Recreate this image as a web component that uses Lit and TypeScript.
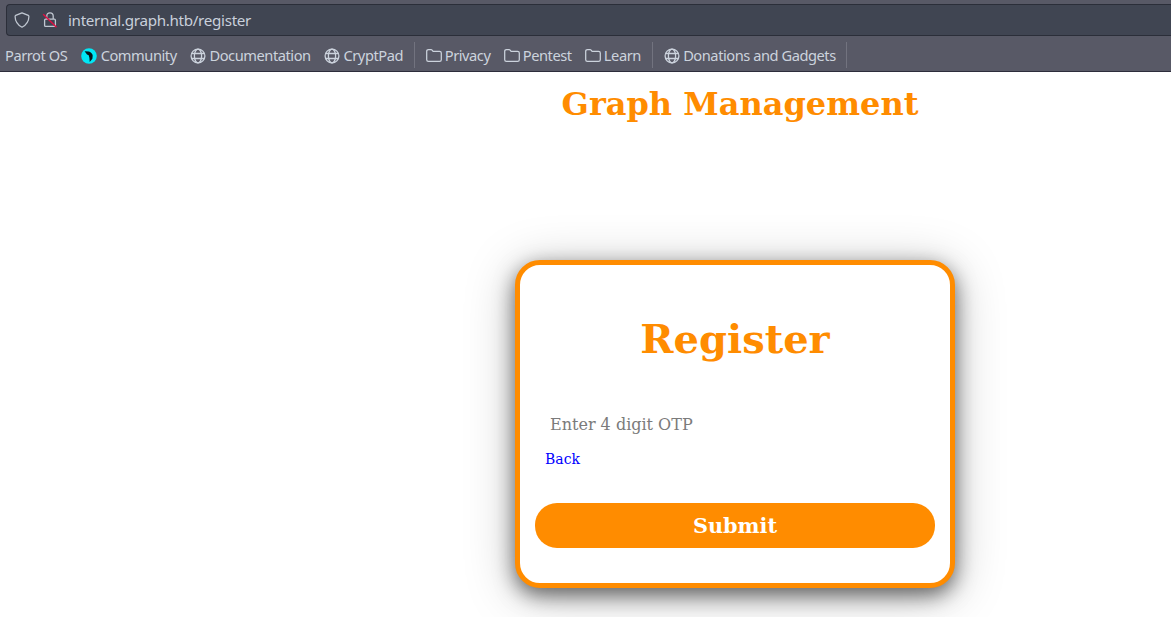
import { LitElement, html, css, svg } from "lit";
import { customElement } from "lit/decorators.js";

const globe = svg`<svg class="icon" viewBox="0 0 16 16" width="16" height="16" fill="none" stroke="currentColor" stroke-width="1.3">
  <circle cx="8" cy="8" r="6.9"/><ellipse cx="8" cy="8" rx="3.6" ry="6.9"/><path d="M1.7 5.5h12.6M1.7 10.5h12.6"/></svg>`;
const folder = svg`<svg class="icon folder" viewBox="0 0 16 16" width="16" height="16" fill="none" stroke="currentColor" stroke-width="1.25">
  <path d="M.7 3.4q0-1.8 1.9-1.8H5q.7 0 1.1.5l1 1.2h6.5q1.7 0 1.7 1.7v6.7q0 1.6-1.7 1.6H2.4q-1.7 0-1.7-1.6z"/></svg>`;
const community = svg`<svg class="icon" viewBox="0 0 16 16" width="16" height="16">
  <circle cx="8" cy="8" r="7.8" fill="#00e8f6"/><path d="M3.6 3.2L8 3.4q3.3 1.2 3.7 4.2l-.3 3.1-2.7 3.4-.3-4.3-.7-2.6-1.7-.6z" fill="#061519"/></svg>`;

@customElement("app-root")
export class AppRoot extends LitElement {
  static styles = css`
    :host { display: block; height: 617px; overflow: hidden; background: #fff; font-family: "DejaVu Serif", serif; }
    .chrome { box-sizing: border-box; height: 72px; padding-top: 4px; background: #585966; border-bottom: 1px solid #2d2d3b;
      font-family: "Noto Sans", sans-serif; font-size: 14.67px; color: #d3dae3; }
    .url { box-sizing: border-box; height: 32px; margin-left: 6px; border: 1px solid #2b2e39; border-right: 0; border-radius: 4px 0 0 4px;
      background: #404552; display: flex; align-items: center; padding-left: 7px; }
    .lock { margin-left: 12px; }
    .address { margin-left: 10px; white-space: nowrap; font-size: 15.2px; letter-spacing: -.31px; color: #c9d0db; }
    .bookmarks { display: flex; align-items: center; height: 35px; padding: 2px 0 0 5px; box-sizing: border-box; white-space: nowrap;
      letter-spacing: -.46px; color: #ccd3dd; }
    .mark { display: flex; align-items: center; gap: 3.6px; margin-right: 13.2px; }
    .mark:first-child { margin-right: 13.8px; }
    .icon { display: block; flex: none; }
    .bookmarks .icon { margin-top: 2px; }
    .bookmarks .folder { margin-right: -.5px; }
    .sep { width: 1px; height: 26px; background: #72737f; margin: 0 11px 0 -2.5px; }
    .title { margin: 13px 1px 0 310px; font-size: 32px; line-height: 38px; font-weight: bold; color: #ff8c00; text-align: center; }
    .card { box-sizing: border-box; width: 440px; height: 328px; margin: 137px 0 0 515px; border: 5px solid #ff8c00; border-radius: 25px;
      padding: 50px 15px 0; background: #fff; box-shadow: 0 7px 20px rgba(0,0,0,.54), 0 7px 50px rgba(0,0,0,.25); }
    .heading { margin: 0; font-size: 40px; line-height: 47px; font-weight: bold; color: #ff8c00; text-align: center; }
    .otp { display: block; box-sizing: border-box; width: 380px; height: 39px; margin: 43px 0 0 10px; padding: 0 5px; border: 0; outline: 0;
      background: transparent; font: 16px "DejaVu Serif", serif; }
    .otp::placeholder { color: #7b7b7b; opacity: 1; }
    .back { display: block; width: max-content; margin: 6px 0 0 10px; font-size: 14px; line-height: 18px; color: #00f; text-decoration: none; }
    .submit { display: block; width: 400px; height: 45px; margin-top: 35px; padding: 0; border: 0; border-radius: 22px; background: #ff8c00;
      color: #fff; font: bold 20.8px "DejaVu Serif", serif; }
  `;

  private mark(label: string, icon: unknown = "") {
    return html`<span class="mark">${icon}<span>${label}</span></span>`;
  }

  render() {
    return html`
      <header class="chrome">
        <div class="url">
          <svg class="icon" width="16" height="16" viewBox="0 0 16 16" fill="none" stroke="#c0c7d1" stroke-width="1.25" stroke-linejoin="round">
            <path d="M8 .8l6.3 2.6q.6.3.6 1-.1 7.1-6.9 10.8Q1.2 11.5 1.1 4.4q0-.7.6-1z"/></svg>
          <svg class="icon lock" width="16" height="16" viewBox="0 0 16 16" fill="none">
            <path d="M4.8 7.2V4.1Q4.8.8 8 .8t3.2 3.3v3.1M3.6 7.2h8.8q1 0 1 1v5.2q0 1-1 1H3.6q-1 0-1-1V8.2q0-1 1-1z" stroke="#c0c7d1" stroke-width="1.3"/>
            <path d="M1.2 2.2l13.3 13" stroke="#e20d42" stroke-width="1.4"/></svg>
          <span class="address">internal.graph.htb/register</span>
        </div>
        <nav class="bookmarks">
          ${this.mark("Parrot OS")}${this.mark("Community", community)}${this.mark("Documentation", globe)}${this.mark("CryptPad", globe)}
          <span class="sep"></span>
          ${this.mark("Privacy", folder)}${this.mark("Pentest", folder)}${this.mark("Learn", folder)}
          <span class="sep"></span>
          ${this.mark("Donations and Gadgets", globe)}
          <span class="sep"></span>
        </nav>
      </header>
      <h1 class="title">Graph Management</h1>
      <main class="card">
        <h2 class="heading">Register</h2>
        <input class="otp" placeholder="Enter 4 digit OTP" />
        <a class="back" href="#">Back</a>
        <button class="submit">Submit</button>
      </main>
    `;
  }
}
